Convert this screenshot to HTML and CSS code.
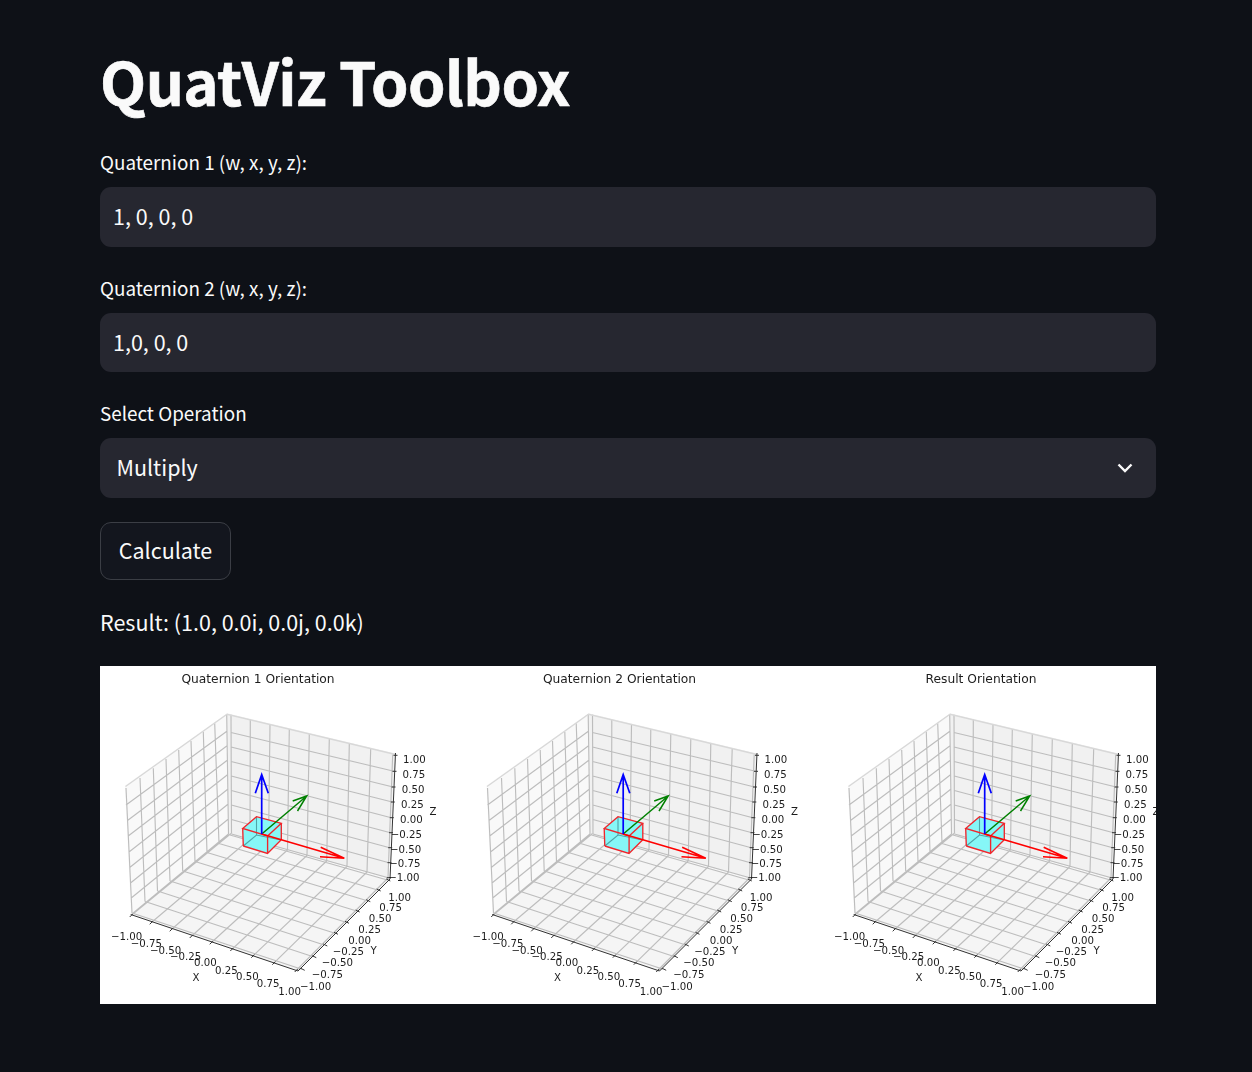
FILE: index.html
```html
<!DOCTYPE html>
<html lang="en">
<head>
<meta charset="utf-8">
<title>QuatViz Toolbox</title>
<link rel="stylesheet" href="styles.css">
</head>
<body>
<main class="page">
  <h1 class="title">QuatViz Toolbox</h1>
  <section class="field">
    <label class="field-label">Quaternion 1 (w, x, y, z):</label>
    <div class="control text-control">1, 0, 0, 0</div>
  </section>
  <section class="field">
    <label class="field-label">Quaternion 2 (w, x, y, z):</label>
    <div class="control text-control">1,0, 0, 0</div>
  </section>
  <section class="field">
    <label class="field-label">Select Operation</label>
    <div class="control select-control">
      <span>Multiply</span>
      <svg class="chevron" viewBox="0 0 16 10" width="16" height="10" aria-hidden="true"><path d="M1.5 1.5 8 8l6.5-6.5"/></svg>
    </div>
  </section>
  <button class="calc-button" type="button">Calculate</button>
  <p class="result">Result: (1.0, 0.0i, 0.0j, 0.0k)</p>
  <figure class="chart">
    <svg class="chart-svg" viewBox="0 0 1056 338" width="1056" height="338">
      <defs>
        <g id="plot">
          <polygon class="pane-left" points="25,119.5 127,47.3 128.5,168 31,249"/>
          <polygon class="pane-back" points="127,47.3 295.5,87.5 288.5,213 128.5,168"/>
          <polygon class="pane-floor" points="31,249 128.5,168 289.5,213.5 198,305.5"/>
          <path class="grid" d="M26 122L32 247M40 112L45 235.5M53.3 102.3L57.5 225M66 93L70 215M78.7 84L82.7 205M91 75L95 195.5M103.3 65.7L107 186.5M114.7 57.3L119 177.5M126.7 48.3L128.5 168
          M26 139L127.2 65M27.5 154.5L127.4 79.5M28.2 170L127.6 94M29 186L127.8 108.5M29.7 201.5L128 123M30.5 217L128.2 138M31.2 232L128.4 153M32 248L128.5 168
          M131 66.5L294 105.3M131 81L293 121M131.1 95.5L292.3 136M131.2 110L291.3 151.7M131.3 124.5L290.5 166.7M131.3 139L289.7 181.7M131.4 153.5L289 196.7M131.5 168L288.3 211.7
          M131 48.7L131.5 167.5M150.3 53.5L150 173M170 58.3L168.5 178.5M189.3 63L187.5 184M209.3 68L207 189.5M229.3 73L226.7 195M249.3 78L247 200.5M270.7 83L267 206M292.7 88.5L288 212
          M131 167.5L31.7 249M150 173L51.7 256.3M168.5 178.5L71.7 263.3M187.5 184L91.7 270M207 189.5L111.7 276.3M226.7 195L132.3 283M247 200.5L153.3 289.7M267 206L174.3 296.7M288 212L196.7 304
          M32 247L201.7 303.3M45 235.5L213.3 290.7M57.5 225L224.3 279M70 215L235 267.3M82.7 205L246 256.3M95 195.5L256.7 245M107 186.5L267.3 234.7M119 177.5L277.7 224M130 169L287.3 214"/>
          <path class="pane-edge" d="M25.5 120.5L127 48.3L295.5 88.5"/>
          <path class="axis" d="M30.7 248.5L198 305L290 213L295.5 87"/>
          <path class="ticks" d="M293.5 89.3h4M292.5 105.3h4M291.5 121h4M290.8 136h4M289.8 151.7h4M289 166.7h4M288.2 181.7h4M287.5 196.7h4M286.8 211.7h4
          M32.7 248l-3 3M52.7 255.3l-3 3M72.7 262.3l-3 3M92.7 269l-3 3M112.7 275.3l-3 3M133.3 282l-3 3M154.3 288.7l-3 3M175.3 295.7l-3 3M197.7 303l-3 3
          M200.7 302.3l4 2M212.3 289.7l4 2M223.3 278l4 2M234 266.3l4 2M245 255.3l4 2M255.7 244l4 2M266.3 233.7l4 2M276.7 223l4 2M286.3 213l4 2"/>
          <polygon class="cube-fill" points="142.7,162.5 156.5,150.7 181.3,157.3 181,174 167.5,187.5 143.3,180"/>
          <path class="cube-hidden" d="M156.5 150.7V169M143.3 180L156.5 169L181 174"/>
          <path class="cube-edge" d="M142.7 162.5L156.5 150.7L181.3 157.3L167.6 170ZM143.3 180L167.5 187.5L181 174M142.7 162.5L143.3 180M167.6 170V187.5M181.3 157.3V174"/>
          <path class="arrow-green" d="M161.7 168L206.7 130M192.7 135L206.7 130L197.5 145"/>
          <path class="arrow-red" d="M161.7 168L244.3 192.3M220.7 181.3L244.3 192.3L220 190.7"/>
          <path class="arrow-blue" d="M161.7 168V108.5M155.3 127.3L161.7 108.5L168.3 127.3"/>
          <g class="ticklabels">
            <text x="303" y="96.6">1.00</text><text x="302.5" y="111.9">0.75</text><text x="301.7" y="126.9">0.50</text><text x="301" y="141.9">0.25</text><text x="300" y="156.9">0.00</text><text x="290.7" y="171.9">−0.25</text><text x="290" y="186.9">−0.50</text><text x="289.3" y="200.9">−0.75</text><text x="288.3" y="215.3">−1.00</text>
            <text x="11" y="274.3">−1.00</text><text x="30.7" y="281">−0.75</text><text x="50" y="287.6">−0.50</text><text x="70" y="293.6">−0.25</text><text x="94" y="300.3">0.00</text><text x="115" y="307.6">0.25</text><text x="136" y="314.3">0.50</text><text x="156.7" y="321.3">0.75</text><text x="178.3" y="328.6">1.00</text>
            <text x="288.3" y="234.6">1.00</text><text x="279.3" y="245.3">0.75</text><text x="268.7" y="255.9">0.50</text><text x="258.3" y="266.9">0.25</text><text x="248.3" y="277.6">0.00</text><text x="232.7" y="288.6">−0.25</text><text x="221.7" y="300.3">−0.50</text><text x="211.7" y="311.9">−0.75</text><text x="200" y="323.6">−1.00</text>
            <text x="92.5" y="315.3">X</text><text x="270.5" y="288">Y</text><text x="329.5" y="149">Z</text>
          </g>
        </g>
      </defs>
      <rect class="chart-bg" width="1056" height="338"/>
      <g class="plots">
        <use href="#plot"/>
        <use href="#plot" x="361.5"/>
        <use href="#plot" x="723"/>
      </g>
      <g class="plot-titles">
        <text x="158" y="17">Quaternion 1 Orientation</text>
        <text x="519.5" y="17">Quaternion 2 Orientation</text>
        <text x="881" y="17">Result Orientation</text>
      </g>
    </svg>
  </figure>
</main>
</body>
</html>
```
FILE: styles.css
```css
* { box-sizing: border-box; }
html, body { margin: 0; padding: 0; }
body {
  background: #0e1117;
  color: #fafafa;
  font-family: "Noto Sans CJK JP", "Source Sans Pro", "Noto Sans", sans-serif;
  height: 1072px;
  overflow: hidden;
}
.page {
  width: 1056px;
  margin-left: 100px;
  padding-top: 35px;
  display: flex;
  flex-direction: column;
}
.title {
  margin: 0 0 26px;
  font-size: 60px;
  line-height: 90px;
  font-weight: 700;
  letter-spacing: -0.57px;
  -webkit-text-stroke: 0.6px #fafafa;
}
.field {
  display: flex;
  flex-direction: column;
  gap: 14px;
  margin-bottom: 30px;
}
.field-label {
  font-size: 18.85px;
  line-height: 22px;
}
.control {
  height: 59.6px;
  background: #262730;
  border-radius: 11px;
  display: flex;
  align-items: center;
  font-size: 21.5px;
}
.text-control { padding: 0 13px 2.5px; }
.select-control {
  padding: 0 23px 3px 16.5px;
  justify-content: space-between;
}
.chevron {
  margin-top: 3px;
}
.chevron path {
  fill: none;
  stroke: #fafafa;
  stroke-width: 2.4;
}
.calc-button {
  align-self: flex-start;
  margin-top: -6px;
  width: 131px;
  height: 58px;
  background: #13161e;
  color: #fafafa;
  border: 1px solid #3b3e45;
  border-radius: 11px;
  font-family: inherit;
  font-size: 21.5px;
  padding: 0 0 3px;
}
.result {
  margin: 22.5px 0 0;
  font-size: 21.5px;
  line-height: 40px;
}
.chart {
  margin: 23.5px 0 0;
  height: 338px;
}
.chart-svg { display: block; }
.chart-bg { fill: #fff; }
.plots, .plot-titles { filter: blur(0.35px); }
.pane-left { fill: #f9f9f9; }
.pane-back { fill: #f1f1f1; }
.pane-floor { fill: #f5f5f5; }
.pane-edge { fill: none; stroke: #d8d8d8; stroke-width: 1.3; }
.grid { fill: none; stroke: #bdbdbd; stroke-width: 1.15; }
.axis { fill: none; stroke: #333; stroke-width: 1; }
.ticks { fill: none; stroke: #333; stroke-width: 1; }
.cube-fill { fill: #86f7f7; }
.cube-hidden { fill: none; stroke: #4fa5a8; stroke-width: 1.1; }
.cube-edge { fill: none; stroke: #f0262c; stroke-width: 1.35; }
.arrow-red { fill: none; stroke: #f00; stroke-width: 1.6; }
.arrow-green { fill: none; stroke: #008000; stroke-width: 1.5; }
.arrow-blue { fill: none; stroke: #00f; stroke-width: 1.7; }
.ticklabels text {
  font-family: "DejaVu Sans", sans-serif;
  font-size: 10.2px;
  fill: #1c1c1c;
}
.plot-titles text {
  font-family: "DejaVu Sans", sans-serif;
  font-size: 12.25px;
  fill: #1c1c1c;
  text-anchor: middle;
}
```
